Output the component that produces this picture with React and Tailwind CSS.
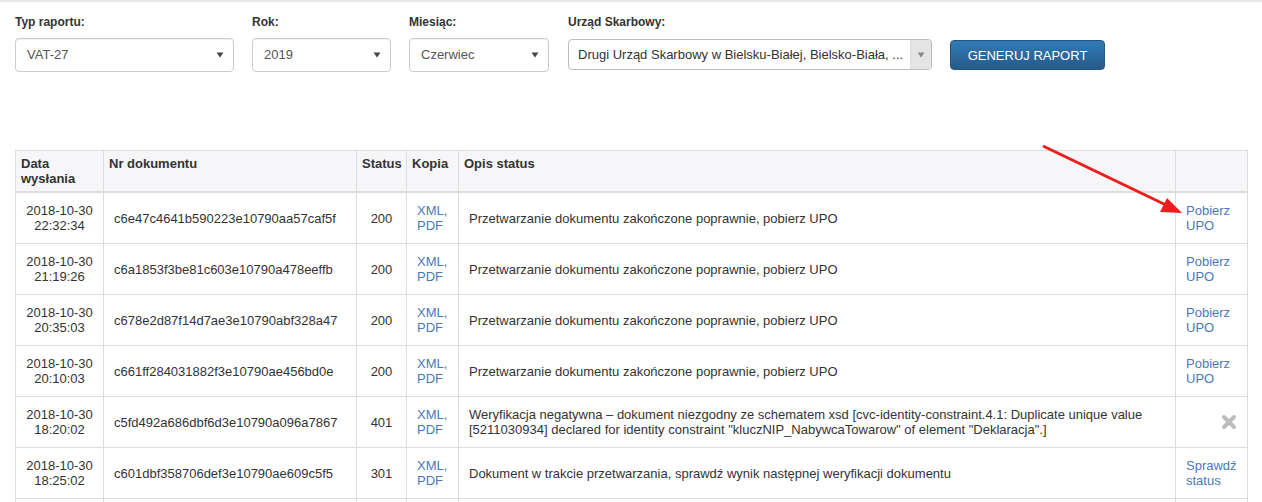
import React from "react";

const rows = [
  { date: "2018-10-30", time: "22:32:34", doc: "c6e47c4641b590223e10790aa57caf5f", status: 200, desc: "Przetwarzanie dokumentu zakończone poprawnie, pobierz UPO", action: "upo" },
  { date: "2018-10-30", time: "21:19:26", doc: "c6a1853f3be81c603e10790a478eeffb", status: 200, desc: "Przetwarzanie dokumentu zakończone poprawnie, pobierz UPO", action: "upo" },
  { date: "2018-10-30", time: "20:35:03", doc: "c678e2d87f14d7ae3e10790abf328a47", status: 200, desc: "Przetwarzanie dokumentu zakończone poprawnie, pobierz UPO", action: "upo" },
  { date: "2018-10-30", time: "20:10:03", doc: "c661ff284031882f3e10790ae456bd0e", status: 200, desc: "Przetwarzanie dokumentu zakończone poprawnie, pobierz UPO", action: "upo" },
  {
    date: "2018-10-30",
    time: "18:20:02",
    doc: "c5fd492a686dbf6d3e10790a096a7867",
    status: 401,
    desc: 'Weryfikacja negatywna – dokument niezgodny ze schematem xsd [cvc-identity-constraint.4.1: Duplicate unique value [5211030934] declared for identity constraint "kluczNIP_NabywcaTowarow" of element "Deklaracja".]',
    action: "x",
  },
  { date: "2018-10-30", time: "18:25:02", doc: "c601dbf358706def3e10790ae609c5f5", status: 301, desc: "Dokument w trakcie przetwarzania, sprawdź wynik następnej weryfikacji dokumentu", action: "check" },
];

function Caret({ className = "" }) {
  return (
    <svg width="8" height="6" viewBox="0 0 8 6" className={className}>
      <path d="M0.5 0.5 L7.5 0.5 L4 5.5 Z" fill="currentColor" />
    </svg>
  );
}

function Select({ label, value, width }) {
  return (
    <div className="flex flex-col" style={{ width }}>
      <label className="text-[12px] font-bold leading-[15px] text-[#333] mb-[8px]">{label}</label>
      <div className="h-[34px] flex items-center justify-between border border-[#ccc] rounded-[4px] pl-[11px] pr-[9px] bg-white text-[13px] text-[#555] shadow-[inset_0_1px_1px_rgba(0,0,0,0.06)]">
        <span>{value}</span>
        <Caret className="text-[#444]" />
      </div>
    </div>
  );
}

function XIcon() {
  return (
    <svg width="16" height="16" viewBox="0 0 16 16" className="inline-block">
      <path d="M3 3 L13 13 M13 3 L3 13" stroke="#bcbcbc" strokeWidth="4" strokeLinecap="round" />
    </svg>
  );
}

export default function App() {
  return (
    <div className="relative w-full h-[502px] overflow-hidden bg-white border-t-2 border-[#e6e6e6] font-['Liberation_Sans',Arial,sans-serif] text-[#333]">
      {/* filters */}
      <div className="flex items-start gap-[18px] pl-[15px] pt-[13px]">
        <Select label="Typ raportu:" value="VAT-27" width={219} />
        <Select label="Rok:" value="2019" width={139} />
        <Select label="Miesiąc:" value="Czerwiec" width={140} />
        <div className="flex flex-col w-[364px] ml-[1px]">
          <label className="text-[12px] font-bold leading-[15px] text-[#333] mb-[9px]">Urząd Skarbowy:</label>
          <div className="h-[31px] flex items-stretch border border-[#bbb] rounded-[4px] bg-white text-[13px] text-[#333]">
            <span className="flex-1 flex items-center pl-[9px] truncate">Drugi Urząd Skarbowy w Bielsku-Białej, Bielsko-Biała, ...</span>
            <span className="w-[21px] flex items-center justify-center bg-[#e4e4e4] rounded-r-[3px] border-l border-[#ddd]">
              <Caret className="text-[#888]" />
            </span>
          </div>
        </div>
        <button className="mt-[25px] h-[30px] w-[155px] rounded-[4px] border border-[#245580] bg-gradient-to-b from-[#337ab7] to-[#265a88] text-white text-[13px] leading-none">
          GENERUJ RAPORT
        </button>
      </div>

      {/* table */}
      <div className="pl-[15px] pr-[15px] mt-[78px]">
        <table className="w-[1232px] table-fixed border-collapse border border-[#ddd] text-[13px] leading-[15px]">
          <colgroup>
            <col className="w-[88px]" />
            <col className="w-[253px]" />
            <col className="w-[50px]" />
            <col className="w-[52px]" />
            <col className="w-[717px]" />
            <col className="w-[72px]" />
          </colgroup>
          <thead>
            <tr className="bg-[#f6f6f8] border-b-2 border-[#ddd] text-left align-top">
              <th className="px-[5px] pt-[5px] pb-[5px] h-[41px] font-bold border-r border-[#ddd]">Data wysłania</th>
              <th className="px-[5px] pt-[5px] font-bold border-r border-[#ddd]">Nr dokumentu</th>
              <th className="px-[5px] pt-[5px] font-bold border-r border-[#ddd]">Status</th>
              <th className="px-[5px] pt-[5px] font-bold border-r border-[#ddd]">Kopia</th>
              <th className="px-[5px] pt-[5px] font-bold border-r border-[#ddd]">Opis status</th>
              <th className="px-[5px] pt-[5px] font-bold"></th>
            </tr>
          </thead>
          <tbody>
            {rows.map((r, i) => (
              <tr key={i} className="border-b border-[#ddd] align-middle">
                <td className="px-[10px] py-[10px] text-center border-r border-[#ddd]">
                  {r.date}
                  <br />
                  {r.time}
                </td>
                <td className="px-[10px] py-[10px] border-r border-[#ddd]">{r.doc}</td>
                <td className="px-[10px] py-[10px] text-center border-r border-[#ddd]">{r.status}</td>
                <td className="px-[10px] py-[10px] border-r border-[#ddd] text-[#4a79ba]">
                  XML,
                  <br />
                  PDF
                </td>
                <td className="px-[10px] py-[10px] border-r border-[#ddd]">{r.desc}</td>
                <td className={`px-[10px] py-[10px] text-[#4a79ba] ${r.action === "x" ? "text-right" : "text-left"}`}>
                  {r.action === "upo" && (
                    <>
                      Pobierz
                      <br />
                      UPO
                    </>
                  )}
                  {r.action === "check" && (
                    <>
                      Sprawdź
                      <br />
                      status
                    </>
                  )}
                  {r.action === "x" && <XIcon />}
                </td>
              </tr>
            ))}
            <tr>
              <td className="h-[20px] border-r border-[#ddd]"></td>
              <td className="border-r border-[#ddd]"></td>
              <td className="border-r border-[#ddd]"></td>
              <td className="border-r border-[#ddd]"></td>
              <td className="border-r border-[#ddd]"></td>
              <td></td>
            </tr>
          </tbody>
        </table>
      </div>

      {/* red annotation arrow */}
      <svg className="absolute left-0 top-0 pointer-events-none" width="1262" height="502">
        <line x1="1043" y1="144" x2="1166" y2="203" stroke="#ee1c1c" strokeWidth="3" />
        <path d="M1182 211 L1160 210 L1167 196 Z" fill="#ee1c1c" />
      </svg>
    </div>
  );
}
